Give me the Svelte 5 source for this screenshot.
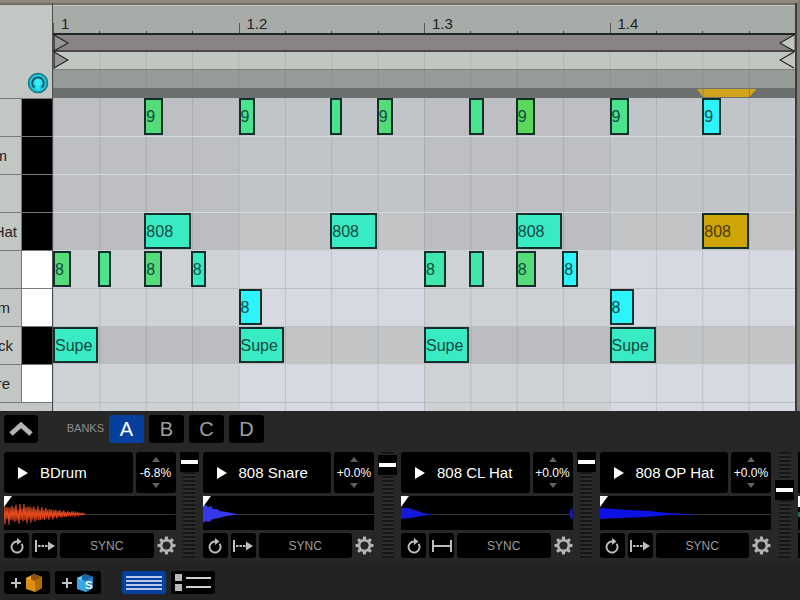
<script lang="ts">
	type Note = { at: number; len: number; text?: string; tone: string };
	type Lane = { label: string; end: number; key: string; notes: Note[] };

	const STEPS = 16;
	const beats = ['1', '1.2', '1.3', '1.4'];

	const n = (at: number, len: number, tone: string, text = ''): Note => ({ at, len, tone, text });

	// `end` is where the scrolled label stops inside its cell
	const lanes: Lane[] = [
		{
			label: '',
			end: 0,
			key: 'black',
			notes: [
				n(1.97, 0.41, 'green', '9'),
				n(4, 0.35, 'mint', '9'),
				n(5.98, 0.26, 'mint'),
				n(6.98, 0.35, 'green', '9'),
				n(8.98, 0.31, 'mint'),
				n(9.98, 0.41, 'leaf', '9'),
				n(12, 0.41, 'mint', '9'),
				n(14, 0.41, 'cyan', '9')
			]
		},
		{ label: 'm', end: 7, key: 'black', notes: [] },
		{ label: '', end: 0, key: 'black', notes: [] },
		{
			label: 'Hat',
			end: 17,
			key: 'black deep',
			notes: [
				n(1.97, 1, 'teal', '808'),
				n(5.98, 1, 'teal', '808'),
				n(9.98, 1, 'teal', '808'),
				n(14, 1, 'gold', '808')
			]
		},
		{
			label: '',
			end: 0,
			key: 'white',
			notes: [
				n(0, 0.38, 'green', '8'),
				n(0.98, 0.28, 'mint'),
				n(1.97, 0.38, 'green', '8'),
				n(2.97, 0.34, 'teal', '8'),
				n(8, 0.47, 'sea', '8'),
				n(8.98, 0.31, 'sea'),
				n(9.98, 0.44, 'green', '8'),
				n(10.98, 0.35, 'cyan', '8')
			]
		},
		{ label: 'm', end: 10, key: 'white', notes: [n(4, 0.5, 'cyan', '8'), n(12, 0.52, 'cyan', '8')] },
		{
			label: 'ck',
			end: 13,
			key: 'black deep',
			notes: [
				n(0, 0.98, 'teal', 'Supe'),
				n(4, 0.98, 'teal', 'Supe'),
				n(8, 0.98, 'teal', 'Supe'),
				n(12, 1, 'teal', 'Supe')
			]
		},
		{ label: 're', end: 10, key: 'white', notes: [] }
	];

	let bank = $state('A');

	let decks = $state([
		{ name: 'BDrum', pitch: '-6.8%', level: 100, mode: 'out', wave: 'kick' },
		{ name: '808 Snare', pitch: '+0.0%', level: 96, mode: 'out', wave: 'snare' },
		{ name: '808 CL Hat', pitch: '+0.0%', level: 100, mode: 'span', wave: 'closed' },
		{ name: '808 OP Hat', pitch: '+0.0%', level: 68, mode: 'out', wave: 'open' }
	]);

	const kickLine = Array.from({ length: 82 }, (_, i) => {
		const env = i < 22 ? 11 - (i % 5) * 0.9 : 9.5 * (1 - (i - 22) / 62);
		const y = 18 + (i % 2 ? 1 : -1) * Math.max(env * (0.8 + 0.2 * Math.sin(i * 1.7)), 0.3);
		return `${i},${y.toFixed(1)}`;
	}).join(' ');

	const teeth = [0, 45, 90, 135, 180, 225, 270, 315];
	const pct = (v: number) => `${(v / STEPS) * 100}%`;
</script>

<main>
	<section class="roll">
		<div class="side">
			<div class="corner">
				<button class="preview" aria-label="Preview notes">
					<svg viewBox="0 0 22 22" width="22" height="22">
						<circle cx="11" cy="11" r="9.5" fill="#22c9dc" stroke="#14758a" stroke-width="1.6" />
						<path d="M7.2 15.5A5.800 5.800 0 1 1 14.8 15.5" fill="none" stroke="#0b5368" stroke-width="1.8" />
						<path d="M7.5 10.500a3.500 3.500 0 0 1 7 0c0 1.500-1 2.500-2 3v4h-3v-4c-1-.5-2-1.500-2-3z" fill="#35eef8" />
					</svg>
				</button>
			</div>
			{#each lanes as lane}
				<div class="key-row">
					<div class="label"><span style:width="{lane.end}px">{lane.label}</span></div>
					<div class="key {lane.key}"></div>
				</div>
			{/each}
		</div>

		<div class="canvas">
			<div class="ruler">
				{#each beats as beat}
					<div class="beat-mark"><span>{beat}</span><i></i><i></i><i></i></div>
				{/each}
			</div>
			<div class="loop">
				<svg viewBox="0 0 16 17" width="16" height="17"><path d="M1 0L15 8L1 16z" /></svg>
				<svg viewBox="0 0 16 17" width="16" height="17"><path class="end" d="M15 0L1 8L15 16" /></svg>
			</div>
			<div class="scrub">
				<svg viewBox="0 0 16 17" width="16" height="17"><path d="M1 0L15 8L1 16z" /></svg>
				<svg viewBox="0 0 16 17" width="16" height="17"><path class="end" d="M15 0L1 8L15 16" /></svg>
			</div>
			<div class="overview"></div>
			<div class="range">
				<svg style:left={pct(13.88)} style:width={pct(1.28)} viewBox="0 0 60 8" preserveAspectRatio="none">
					<path d="M0 0H60L53 8H6z" fill="#d3a51d" />
					<path d="M6 0V8M53 0V8" stroke="#8e8454" stroke-width="1" />
				</svg>
			</div>
			<div class="lanes">
				{#each lanes as lane}
					<div class="lane {lane.key}">
						{#each lane.notes as note}
							<div class="note {note.tone}" style:left={pct(note.at)} style:width={pct(note.len)}>
								{note.text}
							</div>
						{/each}
					</div>
				{/each}
				<div class="lane white tail"></div>
			</div>
		</div>
	</section>

	<section class="sampler">
		<header>
			<button class="box collapse" aria-label="Collapse">
				<svg viewBox="0 0 24 16" width="24" height="16"><path d="M2 13L12 4L22 13" fill="none" stroke="#b4b4b4" stroke-width="5" /></svg>
			</button>
			<span class="banks">BANKS</span>
			{#each ['A', 'B', 'C', 'D'] as name}
				<button class="box bank" class:active={bank === name} onclick={() => (bank = name)}>{name}</button>
			{/each}
		</header>

		<div class="decks">
			{#each decks as deck}
				<article class="deck">
					<div class="pads">
						<div class="line">
							<button class="box title">
								<svg viewBox="0 0 10 12" width="10" height="12"><path d="M0 0L10 6L0 12z" fill="#fff" /></svg>
								<span>{deck.name}</span>
							</button>
							<div class="box pitch">
								<button aria-label="Pitch up"><svg viewBox="0 0 8 5" width="8" height="5"><path d="M4 0L8 5H0z" /></svg></button>
								<span>{deck.pitch}</span>
								<button aria-label="Pitch down"><svg viewBox="0 0 8 5" width="8" height="5"><path d="M0 0H8L4 5z" /></svg></button>
							</div>
						</div>

						<svg class="wave" viewBox="0 0 172 34" preserveAspectRatio="none">
							<path d="M0 18.500H172" stroke="#383838" />
							{#if deck.wave === 'kick'}
								<polyline points={kickLine} fill="none" stroke="#e5481c" stroke-width="1.1" />
							{:else if deck.wave === 'snare'}
								<path d="M0 10L3 9L5 11L8 10L10 13L14 13L17 15L24 16L36 18.500L24 20L16 22L10 23L6 26L3 25L0 27z" fill="#3438e6" />
							{:else if deck.wave === 'closed'}
								<path d="M0 12L7 12L14 14L22 17L32 18.500L20 20L10 22L0 23z" fill="#1419dd" />
								<path d="M172 11L170 14L169 18L170 22L172 24z" fill="#1419dd" />
							{:else}
								<path d="M0 12L14 13L30 14L50 15L68 17L98 18.500L70 19L45 21L20 22L0 23z" fill="#0c12e6" />
							{/if}
							<path d="M0 0H8L0 11z" fill="#fff" />
						</svg>

						<div class="line controls">
							<button class="box small" aria-label="Loop">
								<svg viewBox="0 0 16 16" width="16" height="16">
									<path d="M12.500 5.800A5.500 5.500 0 1 1 8 3.500" fill="none" stroke="#bdbdbd" stroke-width="1.900" />
									<path d="M8 0L12.500 3.500L8 7z" fill="#bdbdbd" />
								</svg>
							</button>
							<button class="box small" aria-label="Play mode">
								{#if deck.mode === 'out'}
									<svg viewBox="0 0 20 12" width="20" height="12">
										<path d="M1 0V12" stroke="#bdbdbd" stroke-width="2" />
										<path d="M3 6H13" stroke="#bdbdbd" stroke-width="1.800" stroke-dasharray="2.500 1" />
										<path d="M13 1.500L20 6L13 10.500z" fill="#bdbdbd" />
									</svg>
								{:else}
									<svg viewBox="0 0 20 12" width="20" height="12">
										<path d="M1 0V12M19 0V12M1 6H19" stroke="#bdbdbd" stroke-width="2" />
									</svg>
								{/if}
							</button>
							<button class="box sync">SYNC</button>
							<button class="gear" aria-label="Settings">
								<svg viewBox="0 0 20 20" width="19" height="19">
									<circle cx="10" cy="10" r="5.600" fill="none" stroke="#b4b4b4" stroke-width="2.600" />
									{#each teeth as angle}
										<path d="M8 4L8.600 0.500H11.400L12 4z" fill="#b4b4b4" transform="rotate({angle} 10 10)" />
									{/each}
								</svg>
							</button>
						</div>
					</div>
					<input class="fader" type="range" min="0" max="100" bind:value={deck.level} aria-label="{deck.name} volume" />
				</article>
			{/each}
			<div class="next"><i></i><i></i><i></i></div>
		</div>

		<footer>
			<button class="box add" aria-label="Add sample">
				<svg viewBox="0 0 32 20" width="32" height="20">
					<path d="M0 10H10M5 5V15" stroke="#c4c4c4" stroke-width="2" />
					<path d="M15 5L23 1L31 4V15L24 19L15 16z" fill="#dd8d12" />
					<path d="M15 5L23 1L31 4L24 8z" fill="#8d5507" />
					<path d="M15 5L20 3V8z" fill="#f0a531" />
					<path d="M24 8L31 4V15L24 19z" fill="#b06c08" />
				</svg>
			</button>
			<button class="box add" aria-label="Add loop">
				<svg viewBox="0 0 32 20" width="32" height="20">
					<path d="M0 10H10M5 5V15" stroke="#c4c4c4" stroke-width="2" />
					<path d="M15 5L23 1L31 4V15L24 19L15 16z" fill="#38a7e8" />
					<path d="M15 5L23 1L31 4L24 8z" fill="#1766a5" />
					<path d="M15 5L20 3V8z" fill="#72cbf8" />
					<path d="M24 8L31 4V15L24 19z" fill="#2086ca" />
					<text x="23" y="16" fill="#fff" font-size="11" font-weight="700">S</text>
				</svg>
			</button>
			<button class="box view active" aria-label="Compact view">
				<svg viewBox="0 0 36 16" width="36" height="16"><path d="M0 2H36M0 6H36M0 10H36M0 14H36" stroke="#f4f7ff" stroke-width="1.500" /></svg>
			</button>
			<button class="box view" aria-label="Detail view">
				<svg viewBox="0 0 36 17" width="36" height="17">
					<path d="M0 0H7V7H0zM0 10H7V17H0z" fill="#b9b9b9" />
					<path d="M11 4H36M11 13H36" stroke="#d0d0d0" stroke-width="2" />
				</svg>
			</button>
		</footer>
	</section>
</main>

<style>
	:global(body) {
		margin: 0;
		background: #242424;
		font-family: 'Liberation Sans', Arial, sans-serif;
	}

	button {
		font: inherit;
		color: inherit;
		border: 0;
		padding: 0;
		background: none;
		cursor: pointer;
	}

	svg {
		display: block;
		flex: none;
	}

	/* piano roll */
	.roll {
		display: grid;
		grid-template-columns: 52px 1fr;
		border-top: 3px solid #8f887a;
		border-right: 3px solid #827e74;
		background: #c3c7c3;
		box-shadow: inset 0 2px #6f6f68;
	}

	.side {
		padding-top: 2px;
		overflow: hidden;
	}

	.corner {
		height: 93px;
		display: flex;
		align-items: flex-end;
		justify-content: flex-end;
		box-sizing: border-box;
		padding: 0 3px 4px 0;
	}

	.key-row {
		display: flex;
		height: 38px;
		box-sizing: border-box;
		border-bottom: 1px solid #777a79;
	}

	.key-row:nth-child(2) {
		height: 39px;
		border-top: 1px solid #777a79;
	}

	.label {
		width: 22px;
		border-right: 1px solid #777a79;
		box-sizing: border-box;
		font-size: 15px;
		line-height: 38px;
		color: #222;
	}

	.label span {
		display: flex;
		justify-content: flex-end;
		overflow: hidden;
	}

	.key {
		flex: 1;
	}

	.key.black {
		background: #000;
	}

	.key.white {
		background: #fff;
	}

	.canvas {
		border-left: 1px solid #4c4c4c;
		border-right: 2px solid #3c3c3c;
		padding-top: 2px;
		min-width: 0;
	}

	.ruler {
		display: grid;
		grid-template-columns: repeat(4, 1fr);
		height: 30px;
		box-sizing: border-box;
		background: #a8aca9;
		border-top: 1px solid #c4c8c4;
		border-bottom: 2px solid #232525;
	}

	.beat-mark {
		display: grid;
		grid-template-columns: repeat(4, 1fr);
		align-items: end;
		font-size: 15px;
		line-height: 18px;
		color: #222;
	}

	.beat-mark span {
		padding-left: 8px;
		background: linear-gradient(#555, #555) left bottom / 1px 10px no-repeat;
	}

	.beat-mark i {
		height: 2px;
		border-left: 1px solid #444;
	}

	.loop,
	.scrub {
		display: flex;
		justify-content: space-between;
		height: 17px;
		box-sizing: border-box;
	}

	.loop {
		background: #888486;
		border-bottom: 2px solid #4b4548;
	}

	.scrub {
		background-color: #c1c6c1;
		height: 18px;
		border-bottom: 1px solid #7f8380;
	}

	.loop path,
	.scrub path {
		fill: #979797;
		stroke: #222;
		stroke-width: 1.2;
	}

	.loop path.end,
	.scrub path.end {
		fill: #c1c6c1;
	}

	.overview {
		height: 18px;
		background-color: #969b97;
	}

	.range {
		height: 10px;
		position: relative;
		background: #6b6f6e;
	}

	.range svg {
		position: absolute;
		bottom: 1px;
		height: 8px;
	}

	.scrub,
	.overview {
		background-image: linear-gradient(90deg, rgba(60, 65, 65, 0.12) 1px, transparent 1px);
		background-size: calc(100% / 16) 100%;
	}

	.lane {
		position: relative;
		height: 38px;
		box-sizing: border-box;
		border-bottom: 1px solid transparent;
		background-size:
			calc(100% / 16) 100%,
			50% 100%;
	}

	.lane:first-child {
		height: 39px;
	}

	.lane.black {
		background-image:
			linear-gradient(90deg, rgba(60, 65, 65, 0.16) 1px, transparent 1px),
			linear-gradient(90deg, #bebfc3 50%, #c1c5c9 50%);
		border-bottom-color: #d4d9dc;
	}

	.lane.deep {
		background-image:
			linear-gradient(90deg, rgba(60, 65, 65, 0.16) 1px, transparent 1px),
			linear-gradient(90deg, #bcbdc0 50%, #c2c4c6 50%);
		border-bottom-color: #cfd3d5;
	}

	.lane.white {
		background-image:
			linear-gradient(90deg, rgba(60, 65, 65, 0.16) 1px, transparent 1px),
			linear-gradient(90deg, #cfd2d5 50%, #d6d9e2 50%);
		border-bottom-color: #b9bdc1;
	}

	.lane.tail {
		height: 8px;
		border-bottom: 0;
	}

	.note {
		position: absolute;
		top: 0;
		bottom: 1px;
		box-sizing: border-box;
		border: 2px solid #122f2b;
		font-size: 16px;
		line-height: 33px;
		color: #134a42;
		overflow: hidden;
	}

	.green {
		background: #53dc79;
	}

	.leaf {
		background: #5bd85c;
	}

	.mint {
		background: #4ce38e;
	}

	.sea {
		background: #40e7ac;
	}

	.teal {
		background: #38ebc3;
	}

	.cyan {
		background: #2bf4fa;
	}

	.gold {
		background: #cda507;
		color: #4a3a08;
	}

	/* sampler */
	.sampler {
		background: #272727;
		color: #fff;
	}

	.box {
		display: flex;
		align-items: center;
		justify-content: center;
		background: #000;
		border-radius: 3px;
	}

	.box.active {
		background: #06409f;
		color: #fff;
	}

	header {
		display: flex;
		align-items: center;
		gap: 5px;
		padding: 4px 4px 9px;
	}

	.collapse {
		width: 34px;
		height: 28px;
	}

	.banks {
		width: 61px;
		text-align: right;
		font-size: 11px;
		line-height: 14px;
		padding-bottom: 2px;
		color: #8d8d8d;
	}

	.bank {
		width: 35px;
		height: 28px;
		font-size: 20px;
		color: #a0a0a0;
	}

	.decks {
		display: grid;
		grid-template-columns: repeat(4, 1fr) 2px;
		padding-left: 4px;
	}

	.deck {
		display: flex;
		gap: 4px;
		padding-right: 4px;
	}

	.pads {
		flex: 1;
		min-width: 0;
	}

	.line {
		display: flex;
		gap: 3px;
	}

	.title {
		flex: 1;
		height: 41px;
		font-size: 15px;
		justify-content: flex-start;
		padding-left: 14px;
	}

	.title span {
		flex: 1;
		padding-left: 12px;
		text-align: left;
	}

	.pitch {
		width: 40px;
		flex-direction: column;
		justify-content: space-between;
		box-sizing: border-box;
		padding: 5px 0;
		font-size: 12px;
		line-height: 14px;
	}

	.pitch path {
		fill: #606060;
	}

	.wave {
		width: 100%;
		height: 34px;
		margin: 3px 0;
		background: #000;
	}

	.small {
		width: 25px;
		height: 25px;
	}

	.sync {
		flex: 1;
		font-size: 12px;
		color: #9d9d9d;
	}

	.gear {
		display: flex;
		align-items: center;
	}

	.fader {
		appearance: none;
		writing-mode: vertical-lr;
		direction: rtl;
		width: 19px;
		height: 106px;
		margin: 0;
		background: repeating-linear-gradient(#171717 0 2px, #2c2c2c 2px 4px) center / 12px 100% no-repeat;
	}

	.fader::-webkit-slider-thumb {
		appearance: none;
		width: 19px;
		height: 20px;
		background: linear-gradient(#fff, #fff) center / 17px 4px no-repeat #000;
	}

	.next {
		display: flex;
		flex-direction: column;
		gap: 3px;
	}

	.next i {
		height: 41px;
		background: #000;
	}

	.next i + i {
		height: 34px;
		background: linear-gradient(#fff 11px, #000 11px 16px, #176f5b 16px 21px, #000 21px);
	}

	.next i + i + i {
		height: 25px;
		background: #000;
	}

	footer {
		display: flex;
		gap: 5px;
		margin-top: 5px;
		padding: 8px 4px 6px;
		background: #232323;
	}

	.add {
		width: 46px;
		height: 23px;
	}

	.view {
		width: 44px;
		height: 23px;
	}

	.add + .view {
		margin-left: 16px;
	}
</style>
